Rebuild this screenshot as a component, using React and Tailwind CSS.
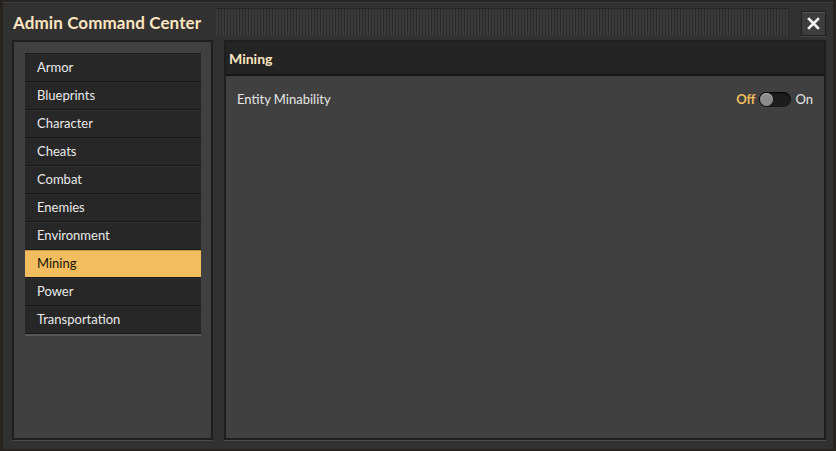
import { useState } from 'react';

const items = [
  'Armor',
  'Blueprints',
  'Character',
  'Cheats',
  'Combat',
  'Enemies',
  'Environment',
  'Mining',
  'Power',
  'Transportation',
];

const App = () => {
  const [selected, setSelected] = useState('Mining');
  const [on, setOn] = useState(false);

  return (
    <div className="w-[836px] h-[451px] bg-[#27231f] px-[3px] pt-[2px] pb-[2px] font-['Lato',sans-serif]">
      <div className="h-full bg-[#313131] flex flex-col shadow-[inset_0_1px_0_#3e3e3e]">
        {/* title bar */}
        <div className="h-[38px] flex items-center pl-[10px] pr-[7px]">
          <h1 className="text-[17px] font-bold text-[#ffe6c0] leading-none tracking-[0.1px] mt-[2px]">
            Admin Command Center
          </h1>
          <div className="flex-1 h-[28px] ml-[15px] mr-[12px] mt-[1px] bg-[repeating-linear-gradient(90deg,#3a3a3a_0px,#3a3a3a_2px,#2b2b2b_2px,#2b2b2b_3px)] shadow-[inset_0_1px_0_#262626]" />
          <button className="w-[25px] h-[25px] mt-[4px] bg-[#3d3d3d] border border-[#1f1f1f] shadow-[inset_0_1px_0_#555,0_1px_0_#474747] flex items-center justify-center">
            <svg width="13" height="13" viewBox="0 0 13 13">
              <path d="M2 2L11 11M11 2L2 11" stroke="#f2f2f2" strokeWidth="2.6" strokeLinecap="square" />
            </svg>
          </button>
        </div>

        {/* body */}
        <div className="flex-1 flex gap-[11px] pl-[9px] pr-[7px] pb-[9px]">
          {/* left panel */}
          <div className="w-[201px] bg-[#404040] border-2 border-[#1e1e1e] shadow-[0_1px_0_#4a4a4a] pt-[11px] pl-[11px] pr-[10px]">
            <div className="bg-[#1b1b1b] border-t border-[#1a1a1a] shadow-[0_2px_0_#575757]">
              {items.map((item) => (
                <div
                  key={item}
                  onClick={() => setSelected(item)}
                  className={`h-[28px] flex items-center pl-[12px] text-[13px] border-b border-[#171717] cursor-pointer ${
                    selected === item
                      ? 'bg-[#f1bd5f] text-[#1b1408] shadow-[inset_0_1px_0_#c99a45]'
                      : 'bg-[#272727] text-[#eaeaea] shadow-[inset_0_1px_0_#2f2f2f]'
                  }`}
                >
                  {item}
                </div>
              ))}
            </div>
          </div>

          {/* right panel */}
          <div className="flex-1 bg-[#404040] border-2 border-[#1e1e1e] shadow-[0_1px_0_#4a4a4a] flex flex-col">
            <div className="h-[34px] bg-[#242424] border-b-2 border-[#161616] flex items-center px-[3px]">
              <h2 className="text-[14px] font-bold text-[#ffe6c0]">{selected}</h2>
            </div>
            <div className="px-[11px] pt-[14px]">
              <div className="flex items-center justify-between">
                <span className="text-[13px] text-[#e6e6e6]">Entity Minability</span>
                <div className="flex items-center gap-[4px] text-[13px]">
                  <span className={on ? 'text-[#e6e6e6]' : 'text-[#f0bd5d] font-bold'}>Off</span>
                  <button
                    onClick={() => setOn(!on)}
                    className={`w-[32px] h-[15px] rounded-full bg-[#1d1d1d] shadow-[inset_0_1px_2px_#000] flex items-center px-[1px] ${
                      on ? 'justify-end' : 'justify-start'
                    }`}
                  >
                    <span className="w-[13px] h-[13px] rounded-full bg-[#8c8c8c] shadow-[inset_0_1px_0_#aaa]" />
                  </button>
                  <span className={on ? 'text-[#f0bd5d] font-bold' : 'text-[#e6e6e6]'}>On</span>
                </div>
              </div>
            </div>
          </div>
        </div>
      </div>
    </div>
  );
};

export default App;
